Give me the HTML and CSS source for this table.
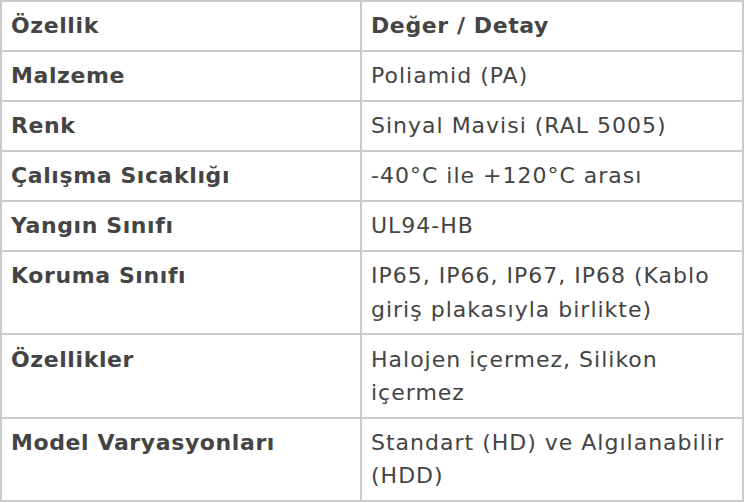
FILE: index.html
```html
<!DOCTYPE html>
<html lang="tr">
<head>
<meta charset="utf-8">
<title>Özellikler</title>
<link rel="stylesheet" href="styles.css">
</head>
<body>
<table class="spec">
  <colgroup><col class="c1"><col class="c2"></colgroup>
  <thead>
    <tr><th>Özellik</th><th>Değer / Detay</th></tr>
  </thead>
  <tbody>
    <tr><td class="k">Malzeme</td><td>Poliamid (PA)</td></tr>
    <tr><td class="k">Renk</td><td>Sinyal Mavisi (RAL 5005)</td></tr>
    <tr><td class="k">Çalışma Sıcaklığı</td><td>-40°C ile +120°C arası</td></tr>
    <tr><td class="k">Yangın Sınıfı</td><td>UL94-HB</td></tr>
    <tr><td class="k">Koruma Sınıfı</td><td>IP65, IP66, IP67, IP68 (Kablo giriş plakasıyla birlikte)</td></tr>
    <tr><td class="k">Özellikler</td><td>Halojen içermez, Silikon içermez</td></tr>
    <tr><td class="k">Model Varyasyonları</td><td>Standart (HD) ve Algılanabilir (HDD)</td></tr>
  </tbody>
</table>
</body>
</html>
```
FILE: styles.css
```css
html, body {
  margin: 0;
  padding: 0;
  background: #ffffff;
}
.spec {
  border-collapse: collapse;
  table-layout: fixed;
  width: 742px;
  font-family: "DejaVu Sans", Inter, sans-serif;
  font-size: 22px;
  line-height: 33.33px;
  color: #444444;
}
.c1 { width: 360px; }
.c2 { width: 382px; }
.spec th,
.spec td {
  border: 2px solid #cccccc;
  padding: 7.33px 9px;
  text-align: left;
  vertical-align: top;
}
.spec th,
.spec td.k {
  font-weight: 700;
  letter-spacing: 0.6px;
}
.spec td {
  font-weight: 400;
  letter-spacing: 1px;
}
```
